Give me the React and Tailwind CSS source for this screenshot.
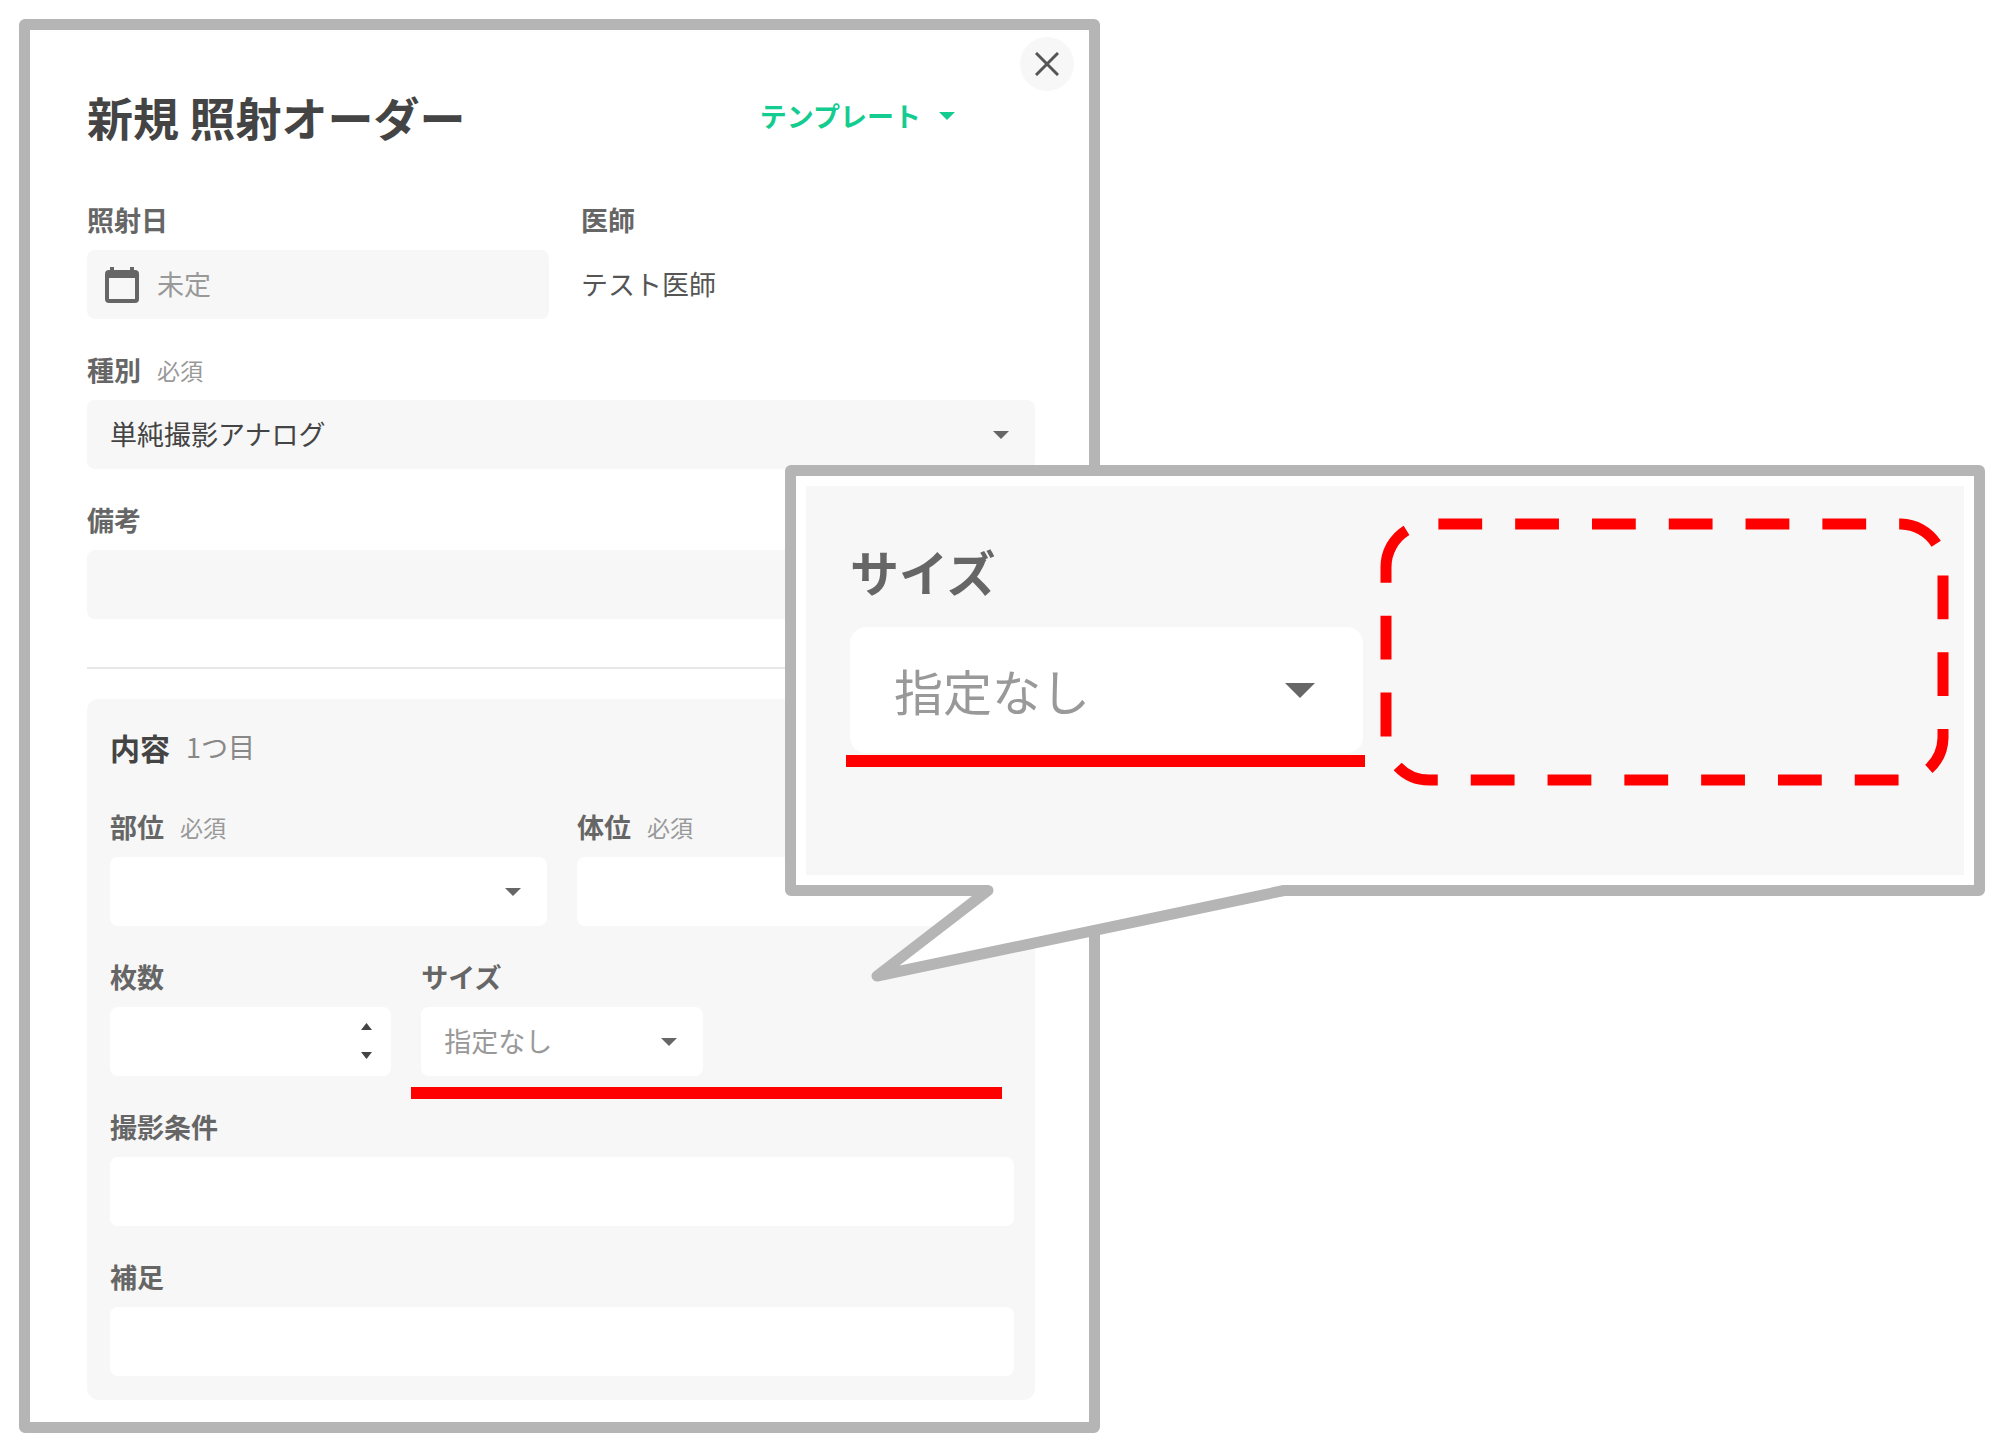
import { useId, useState } from 'react';

const fontStack = "font-['Noto_Sans_CJK_JP',sans-serif]";

const Caret = ({ className = 'w-4 h-2' }) => (
  <svg viewBox="0 0 16 8" className={className} fill="currentColor" preserveAspectRatio="none" aria-hidden="true">
    <path d="M0 0h16L8 8z" />
  </svg>
);

const CalendarIcon = () => (
  <svg viewBox="0 0 34 36" className="w-[34px] h-9 shrink-0" fill="currentColor" aria-hidden="true">
    <path fillRule="evenodd" d="M5 0h4v3h16V0h4v3h1q4 0 4 4v25q0 4-4 4H4q-4 0-4-4V7q0-4 4-4h1zM4 11v21h26V11z" />
  </svg>
);

const Label = ({ htmlFor, required, children }) => (
  <label htmlFor={htmlFor} className="flex items-center gap-4 leading-[38px] mb-[11px] text-[27px] font-bold text-[#666]">
    {children}
    {required && <span className="text-[23px] font-normal text-[#999]">必須</span>}
  </label>
);

const SelectField = ({ label, required, options, tone = 'bg-white' }) => {
  const id = useId();
  const [value, setValue] = useState(options[0]);
  const color = value === '指定なし' ? 'text-[#999]' : 'text-[#444]';

  return (
    <div>
      <Label htmlFor={id} required={required}>{label}</Label>
      <div className="relative">
        <select
          id={id}
          value={value}
          onChange={(e) => setValue(e.target.value)}
          className={`block w-full h-[69px] appearance-none rounded-lg pl-[23px] pr-12 text-[27px] ${tone} ${color}`}
        >
          {options.map((o) => (
            <option key={o} value={o}>{o}</option>
          ))}
        </select>
        <span className="absolute right-[26px] inset-y-0 flex items-center text-[#666] pointer-events-none">
          <Caret />
        </span>
      </div>
    </div>
  );
};

const TextField = ({ label, tone = 'bg-white' }) => {
  const id = useId();
  return (
    <div>
      <Label htmlFor={id}>{label}</Label>
      <input id={id} type="text" className={`block w-full h-[69px] rounded-lg px-[23px] text-[27px] text-[#444] ${tone}`} />
    </div>
  );
};

const CountField = ({ label }) => {
  const id = useId();
  const [count, setCount] = useState('');

  return (
    <div>
      <Label htmlFor={id}>{label}</Label>
      <div className="relative">
        <input
          id={id}
          type="number"
          value={count}
          onChange={(e) => setCount(e.target.value)}
          className="block w-full h-[69px] rounded-lg bg-white px-[23px] text-[27px] text-[#444] [appearance:textfield]"
        />
        <div className="absolute right-[19px] top-4 flex flex-col gap-[22px] text-[#444]">
          <button type="button" aria-label="増やす" onClick={() => setCount(Number(count) + 1)}>
            <Caret className="block w-[11px] h-[7px] rotate-180" />
          </button>
          <button type="button" aria-label="減らす" onClick={() => setCount(Math.max(0, Number(count) - 1))}>
            <Caret className="block w-[11px] h-[7px]" />
          </button>
        </div>
      </div>
    </div>
  );
};

const OrderForm = () => (
  <form className="relative w-[55.1%] border-[11px] border-[#b5b5b5] rounded-md bg-white pt-[52px] pb-[22px] pl-[57px] pr-[54px]">
    <button
      type="button"
      aria-label="閉じる"
      className="absolute top-[7px] right-[15px] size-[54px] rounded-full bg-[#f7f7f7] flex items-center justify-center text-[#555]"
    >
      <svg viewBox="0 0 24 24" className="size-6" fill="none" stroke="currentColor" strokeWidth="3" aria-hidden="true">
        <path d="M1 1l22 22M23 1L1 23" />
      </svg>
    </button>

    <div className="flex items-center justify-between mb-[51px]">
      <h1 className="text-[46px] leading-[68px] font-bold text-[#444]">新規 照射オーダー</h1>
      <button type="button" className="flex items-center gap-[18px] mr-20 text-[27px] leading-10 font-bold text-[#14cc90]">
        テンプレート
        <Caret />
      </button>
    </div>

    <div className="flex flex-col gap-8">
      <div className="grid grid-cols-[462fr_454fr] gap-8">
        <div>
          <Label htmlFor="order-date">照射日</Label>
          <div className="flex items-center gap-[18px] h-[69px] rounded-lg bg-[#f7f7f7] px-[18px] text-[#666]">
            <CalendarIcon />
            <input
              id="order-date"
              type="text"
              placeholder="未定"
              className="w-full min-w-0 bg-transparent text-[27px] text-[#444] placeholder:text-[#999]"
            />
          </div>
        </div>
        <div>
          <p className="leading-[38px] mb-[11px] text-[27px] font-bold text-[#666]">医師</p>
          <p className="flex items-center h-[69px] text-[27px] text-[#555]">テスト医師</p>
        </div>
      </div>
      <SelectField label="種別" required options={['単純撮影アナログ', '単純撮影デジタル']} tone="bg-[#f7f7f7]" />
      <TextField label="備考" tone="bg-[#f7f7f7]" />
    </div>

    <hr className="mt-12 mb-[30px] border-t-2 border-[#e8e8e8]" />

    <section className="rounded-xl bg-[#f7f7f7] pt-7 pb-6 pl-[23px] pr-[21px]">
      <h2 className="flex items-center gap-4 mb-[41px] text-[30px] leading-10 font-bold text-[#444]">
        内容
        <span className="text-[27px] font-normal text-[#888]">1つ目</span>
      </h2>
      <div className="flex flex-col gap-8">
        <div className="grid grid-cols-2 gap-[30px]">
          <SelectField label="部位" required options={['']} />
          <SelectField label="体位" required options={['']} />
        </div>
        <div className="grid grid-cols-3 gap-[30px]">
          <CountField label="枚数" />
          <div className="relative col-span-2 grid grid-cols-2 gap-[30px]">
            <SelectField label="サイズ" options={['指定なし']} />
            <span className="absolute top-full mt-[11px] -left-[10px] right-3 h-3 bg-[#f00]" />
          </div>
        </div>
        <TextField label="撮影条件" />
        <TextField label="補足" />
      </div>
    </section>
  </form>
);

// Enlarged view of the size field, with the tail pointing back at the form
const SizeCallout = () => (
  <aside className="absolute left-[785px] right-[15px] top-[465px] border-[11px] border-[#b5b5b5] rounded-md bg-white p-[10px]">
    <div className="flex gap-[17px] bg-[#f7f7f7] pl-11 pr-[14px] pb-[88px]">
      <div className="flex-1 min-w-0 pt-[49px]">
        <label htmlFor="size-zoom" className="block mb-5 text-[49px] leading-[72px] font-bold text-[#666]">サイズ</label>
        <div className="relative">
          <select id="size-zoom" className="block w-full h-[126px] appearance-none rounded-2xl bg-white pl-11 pr-20 text-[49px] text-[#999]">
            <option>指定なし</option>
          </select>
          <span className="absolute right-12 inset-y-0 flex items-center text-[#666] pointer-events-none">
            <Caret className="w-[30px] h-[15px]" />
          </span>
          <span className="absolute top-full mt-0.5 -left-1 -right-0.5 h-3 bg-[#f00]" />
        </div>
      </div>
      <svg viewBox="0 0 570 269" className="w-[570px] h-[269px] mt-8 shrink-0" fill="none" aria-hidden="true">
        <path
          d="M6 49A43 43 0 0 1 49 6H521A43 43 0 0 1 563 49V220A43 43 0 0 1 521 262H49A43 43 0 0 1 6 220Z"
          stroke="#f00"
          strokeWidth="11"
          strokeDasharray="43.800 33"
        />
      </svg>
    </div>
    <svg viewBox="0 0 430 110" className="absolute left-[74px] top-full w-[430px] h-[110px]" aria-hidden="true">
      <path d="M118 0V6L7 91L414 6V0Z" fill="#fff" />
      <path d="M112 5.500H118L7 91L414 5.500H420" fill="none" stroke="#b5b5b5" strokeWidth="11" strokeLinecap="round" strokeLinejoin="round" />
    </svg>
  </aside>
);

const App = () => (
  <main className={`relative min-h-screen bg-white p-[19px] ${fontStack}`}>
    <OrderForm />
    <SizeCallout />
  </main>
);

export default App;
